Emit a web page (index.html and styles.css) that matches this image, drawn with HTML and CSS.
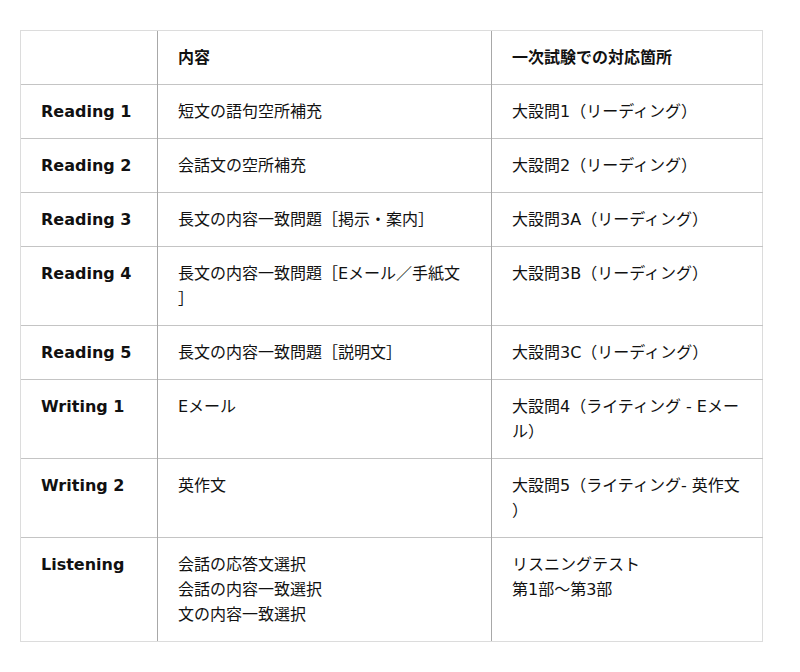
FILE: index.html
```html
<!DOCTYPE html>
<html lang="ja">
<head>
<meta charset="utf-8">
<link rel="stylesheet" href="styles.css">
</head>
<body>
<div class="page">
<table class="map">
<colgroup><col class="c1"><col class="c2"><col class="c3"></colgroup>
<thead>
<tr><th></th><th>内容</th><th>一次試験での対応箇所</th></tr>
</thead>
<tbody>
<tr><th>Reading 1</th><td>短文の語句空所補充</td><td>大設問1（リーディング）</td></tr>
<tr><th>Reading 2</th><td>会話文の空所補充</td><td>大設問2（リーディング）</td></tr>
<tr><th>Reading 3</th><td>長文の内容一致問題［掲示・案内］</td><td>大設問3A（リーディング）</td></tr>
<tr><th>Reading 4</th><td>長文の内容一致問題［Eメール／手紙文］</td><td>大設問3B（リーディング）</td></tr>
<tr><th>Reading 5</th><td>長文の内容一致問題［説明文］</td><td>大設問3C（リーディング）</td></tr>
<tr><th>Writing 1</th><td>Eメール</td><td>大設問4（ライティング - Eメール）</td></tr>
<tr><th>Writing 2</th><td>英作文</td><td>大設問5（ライティング- 英作文）</td></tr>
<tr><th>Listening</th><td>会話の応答文選択<br>会話の内容一致選択<br>文の内容一致選択</td><td>リスニングテスト<br>第1部～第3部</td></tr>
</tbody>
</table>
</div>
</body>
</html>
```
FILE: styles.css
```css
html, body {
  margin: 0;
  padding: 0;
  background: #fff;
}
.page {
  padding: 30px 20px;
  font-family: "DejaVu Sans", "Noto Sans CJK JP", sans-serif;
  font-size: 16px;
  color: #111;
}
.map {
  border-collapse: collapse;
  table-layout: fixed;
  width: 742px;
  border: 1px solid #dcdcdc;
}
.c1 { width: 137px; }
.c2 { width: 334px; }
.c3 { width: 271px; }
.map th, .map td {
  padding: 14px 20px;
  line-height: 25px;
  text-align: left;
  vertical-align: top;
  border-top: 1px solid #c4c4c4;
  border-left: 1px solid #a8a8a8;
  font-weight: normal;
  text-spacing-trim: space-all;
}
.map td {
  line-break: anywhere;
}
.map th {
  font-weight: bold;
}
.map tr > :first-child {
  border-left: 1px solid #dcdcdc;
}
.map thead tr > * {
  border-top: 1px solid #dcdcdc;
}
.map tbody tr:last-child > * {
  border-bottom: 1px solid #dcdcdc;
}
```
